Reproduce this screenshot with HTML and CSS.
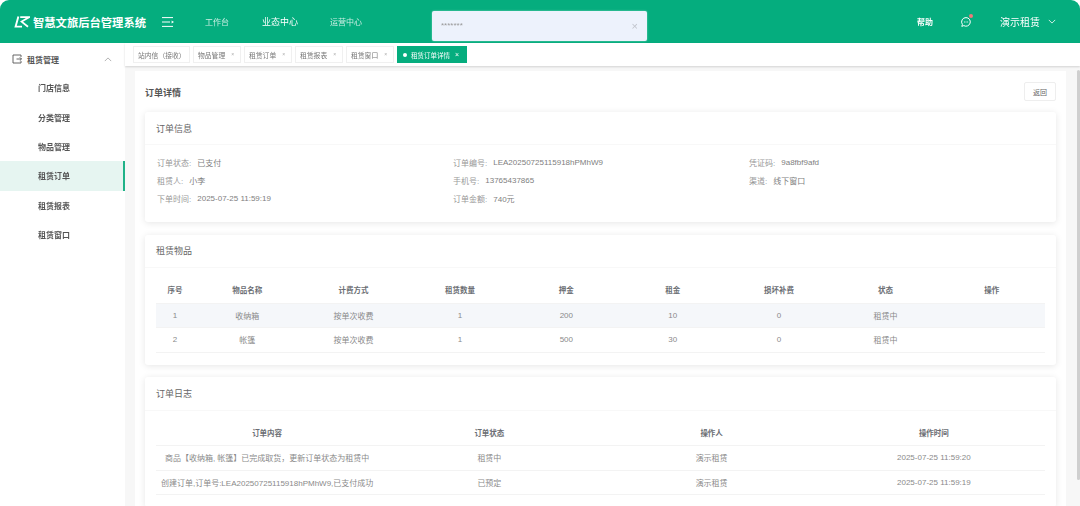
FILE: index.html
```html
<!DOCTYPE html>
<html lang="zh-CN">
<head>
<meta charset="utf-8">
<title>订单详情</title>
<link rel="stylesheet" href="styles.css">
</head>
<body>
<div class="app">
  <header class="topbar">
    <div class="brand">
      <svg class="logo" viewBox="0 0 16 12" aria-hidden="true"><path d="M4.4 0.4 1.6 10.6H8" fill="none" stroke="#fff" stroke-width="1.9"/><path d="M6.2 1.2H15L7.6 5.6l6.4 5.2" fill="none" stroke="#fff" stroke-width="1.8"/></svg>
      <span class="brand-name">智慧文旅后台管理系统</span>
    </div>
    <svg class="burger" viewBox="0 0 12 10" aria-hidden="true"><path d="M0 .6h11M0 5h8M0 9.4h11" fill="none" stroke="#fff" stroke-width="1"/><path d="M9.6 3.6 12 5 9.6 6.4z" fill="#fff"/></svg>
    <nav class="topnav">
      <span class="topnav-item">工作台</span>
      <span class="topnav-item topnav-active">业态中心</span>
      <span class="topnav-item">运营中心</span>
    </nav>
    <div class="top-right">
      <span class="help">帮助</span>
      <span class="msg">
        <svg viewBox="0 0 12 12" aria-hidden="true"><path d="M6 1.6a4.3 4.3 0 1 1-2.2 8L1.8 10.4l.6-2A4.3 4.3 0 0 1 6 1.6z" fill="none" stroke="#fff" stroke-width="1"/><path d="M4 6h.9M5.6 6h.9M7.2 6h.9" stroke="#fff" stroke-width=".9"/></svg>
        <i class="msg-dot"></i>
      </span>
      <span class="user">演示租赁</span>
      <svg class="user-caret" viewBox="0 0 10 6" aria-hidden="true"><path d="M1 1l4 4 4-4" fill="none" stroke="#fff" stroke-width="1"/></svg>
    </div>
  </header>

  <div class="notice">
    <span class="notice-text">*******</span>
    <span class="notice-close">×</span>
  </div>

  <div class="body-row">
    <aside class="sidebar">
      <div class="menu-group">
        <svg class="menu-icon" viewBox="0 0 10 10" aria-hidden="true"><path d="M9 3V1H1v8h8V7M4.5 5H9.5M7.8 3.3 9.5 5 7.8 6.7" fill="none" stroke="#555" stroke-width=".9"/></svg>
        <span class="menu-group-name">租赁管理</span>
        <svg class="menu-caret" viewBox="0 0 10 6" aria-hidden="true"><path d="M1 5l4-4 4 4" fill="none" stroke="#888" stroke-width=".8"/></svg>
      </div>
      <div class="menu-item">门店信息</div>
      <div class="menu-item">分类管理</div>
      <div class="menu-item">物品管理</div>
      <div class="menu-item menu-active">租赁订单</div>
      <div class="menu-item">租赁报表</div>
      <div class="menu-item">租赁窗口</div>
    </aside>

    <div class="content">
      <div class="tabs">
        <span class="tab tab-wide">站内信（接收）</span>
        <span class="tab">物品管理<i class="tab-x">×</i></span>
        <span class="tab">租赁订单<i class="tab-x">×</i></span>
        <span class="tab">租赁报表<i class="tab-x">×</i></span>
        <span class="tab">租赁窗口<i class="tab-x">×</i></span>
        <span class="tab tab-active"><i class="tab-dot"></i>租赁订单详情<i class="tab-close">×</i></span>
      </div>

      <main class="main">
        <div class="page">
          <div class="page-head">
            <h1 class="page-title">订单详情</h1>
            <button class="back">返回</button>
          </div>

          <section class="card">
            <h2 class="card-title">订单信息</h2>
            <div class="info">
              <div class="field"><span class="label">订单状态:</span><span>已支付</span></div>
              <div class="field"><span class="label">订单编号:</span><span>LEA20250725115918hPMhW9</span></div>
              <div class="field"><span class="label">凭证码:</span><span>9a8fbf9afd</span></div>
              <div class="field"><span class="label">租赁人:</span><span>小李</span></div>
              <div class="field"><span class="label">手机号:</span><span>13765437865</span></div>
              <div class="field"><span class="label">渠道:</span><span>线下窗口</span></div>
              <div class="field"><span class="label">下单时间:</span><span>2025-07-25 11:59:19</span></div>
              <div class="field"><span class="label">订单金额:</span><span>740元</span></div>
            </div>
          </section>

          <section class="card card-goods">
            <h2 class="card-title card-title-short">租赁物品</h2>
            <div class="table-wrap">
              <table class="table">
                <colgroup><col class="col-index"><col span="8"></colgroup>
                <thead>
                  <tr><th>序号</th><th>物品名称</th><th>计费方式</th><th>租赁数量</th><th>押金</th><th>租金</th><th>损坏补费</th><th>状态</th><th>操作</th></tr>
                </thead>
                <tbody>
                  <tr class="row-hover"><td>1</td><td>收纳箱</td><td>按单次收费</td><td>1</td><td>200</td><td>10</td><td>0</td><td>租赁中</td><td></td></tr>
                  <tr><td>2</td><td>帐篷</td><td>按单次收费</td><td>1</td><td>500</td><td>30</td><td>0</td><td>租赁中</td><td></td></tr>
                </tbody>
              </table>
            </div>
          </section>

          <section class="card">
            <h2 class="card-title card-title-tall">订单日志</h2>
            <div class="table-wrap">
              <table class="table">
                <thead>
                  <tr><th>订单内容</th><th>订单状态</th><th>操作人</th><th>操作时间</th></tr>
                </thead>
                <tbody>
                  <tr><td>商品【收纳箱, 帐篷】已完成取货，更新订单状态为租赁中</td><td>租赁中</td><td>演示租赁</td><td>2025-07-25 11:59:20</td></tr>
                  <tr><td>创建订单,订单号:LEA20250725115918hPMhW9,已支付成功</td><td>已预定</td><td>演示租赁</td><td>2025-07-25 11:59:19</td></tr>
                </tbody>
              </table>
            </div>
          </section>
        </div>
        <div class="scroll-thumb"></div>
      </main>
    </div>
  </div>
</div>
</body>
</html>
```
FILE: styles.css
```css
* { box-sizing: border-box; }
html, body { margin: 0; height: 100%; background: #fff; overflow: hidden; }
body { font-family: "Liberation Sans", "Noto Sans CJK SC", sans-serif; font-size: 8px; color: #777; }
.app { position: relative; height: 506px; display: flex; flex-direction: column; overflow: hidden; filter: blur(0.4px); }

.topbar { height: 43px; flex: none; background: #05ad7e; border-radius: 9px 9px 0 0; display: flex; align-items: center; color: #fff; }
.brand { display: flex; align-items: center; padding-left: 14px; width: 162px; flex: none; }
.logo { width: 16px; height: 12px; flex: none; }
.brand-name { margin-left: 3px; font-size: 11.3px; font-weight: 700; white-space: nowrap; }
.burger { width: 12px; height: 10px; flex: none; }
.topnav { display: flex; align-items: center; margin-left: 31px; }
.topnav-item { font-size: 8px; color: #c9eee2; }
.topnav-item:nth-child(1) { margin-right: 33px; }
.topnav-active { font-size: 9px; color: #fff; margin-right: 32px; }
.top-right { margin-left: auto; display: flex; align-items: center; padding-right: 24px; }
.help { font-weight: 700; font-size: 8px; }
.msg { position: relative; width: 12px; height: 12px; margin-left: 27px; display: block; }
.msg svg { display: block; width: 12px; height: 12px; }
.msg-dot { position: absolute; top: -2px; right: -1px; width: 4px; height: 4px; border-radius: 50%; background: #f0787a; }
.user { font-size: 10px; margin-left: 28px; }
.user-caret { width: 8px; height: 5px; margin-left: 8px; }

.notice { position: absolute; left: 432px; top: 11px; width: 215px; height: 30px; background: #edf2fc; border-radius: 2px; display: flex; align-items: center; justify-content: space-between; padding: 0 9px; color: #999; box-shadow: 0 0 2px rgba(255,255,255,.5); }
.notice-text { font-size: 8px; line-height: 8px; }
.notice-close { font-size: 11px; color: #c0c4cc; }

.body-row { flex: 1; display: flex; min-height: 0; }
.sidebar { width: 125px; flex: none; background: #fff; padding-top: 2px; }
.menu-group { height: 28px; display: flex; align-items: center; padding: 0 13px 0 12px; }
.menu-icon { width: 10px; height: 10px; flex: none; }
.menu-group-name { margin-left: 5px; color: #555; font-weight: 700; }
.menu-caret { width: 8px; height: 5px; margin-left: auto; }
.menu-item { height: 29.4px; display: flex; align-items: center; padding-left: 38px; color: #555; font-weight: 700; }
.menu-active { background: #e6f5f1; border-right: 2px solid #20b288; }

.content { flex: 1; min-width: 0; display: flex; flex-direction: column; }
.tabs { height: 23px; flex: none; background: #fff; display: flex; align-items: center; gap: 3px; padding: 0 0 0 8px; box-shadow: 0 1px 2px rgba(0,0,0,.15); position: relative; z-index: 1; }
.tab { height: 17px; width: 48px; display: flex; align-items: center; padding-left: 4px; background: #fff; border: 1px solid #f0f0f0; font-size: 6.8px; color: #777; white-space: nowrap; }
.tab-wide { width: 57px; }
.tab-x { font-style: normal; font-size: 5px; line-height: 5px; margin-left: 6px; color: #aaa; }
.tab-active { width: 70px; background: #05ad7e; border-color: #05ad7e; color: #fff; font-size: 6.5px; padding-left: 5px; }
.tab-dot { width: 4px; height: 4px; border-radius: 50%; background: #fff; margin-right: 4px; flex: none; }
.tab-close { font-style: normal; font-size: 7px; margin-left: 5px; }

.main { position: relative; flex: 1; min-height: 0; background: #f7f7f7; padding: 5px 14px 0 10px; overflow: hidden; }
.page { background: #fff; padding: 0 10px; height: 100%; }
.page-head { height: 41px; display: flex; align-items: center; justify-content: space-between; }
.page-title { margin: 1px 0 0; font-size: 9px; font-weight: 700; color: #555; }
.back { width: 32px; height: 19px; padding: 0; background: #fff; border: 1px solid #eee; border-radius: 2px; font: inherit; font-size: 7px; color: #666; }

.card { background: #fff; border-radius: 3px; box-shadow: 0 1px 7px rgba(0,0,0,.1); margin-bottom: 13px; padding-bottom: 12px; }
.card-goods { margin-bottom: 12px; }
.card-title { margin: 0; height: 33px; padding: 1px 0 0 11px; display: flex; align-items: center; font-size: 9px; font-weight: 400; color: #666; border-bottom: 1px solid #f8f8f8; }
.card-title-short { padding-top: 0; padding-bottom: 1px; }
.card-title-tall { height: 34px; }
.info { display: grid; grid-template-columns: 296px 296px 1fr; grid-auto-rows: 18px; padding: 8px 12px 3px; }
.field { display: flex; align-items: center; gap: 6px; color: #808080; white-space: nowrap; }
.label { color: #999; }

.table-wrap { padding: 9px 11px 0; }
.table { width: 100%; table-layout: fixed; border-collapse: collapse; }
.col-index { width: 38px; }
.table th, .table td { height: 24.5px; padding: 0; text-align: center; font-size: 8px; border-bottom: 1px solid #f3f3f3; white-space: nowrap; }
.table th { height: 26px; font-size: 7.5px; color: #6b6e73; font-weight: 700; }
.table td { color: #8a8a8a; }
.row-hover td { background: #f5f7fa; }

.scroll-thumb { position: absolute; right: 0; top: 4px; width: 3px; height: 410px; background: #cfcfcf; border-radius: 2px; }
```
